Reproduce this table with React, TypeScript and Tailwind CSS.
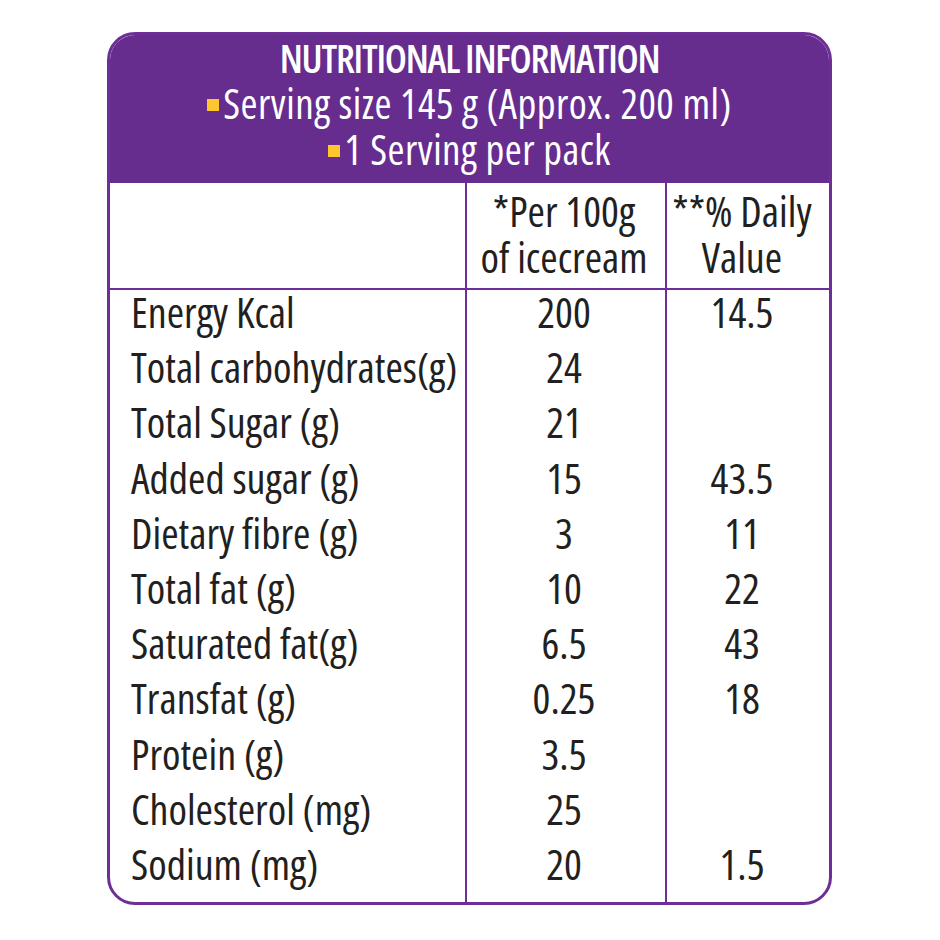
const rows = [
  { name: 'Energy Kcal', per: '200', dv: '14.5' },
  { name: 'Total carbohydrates(g)', per: '24', dv: '' },
  { name: 'Total Sugar (g)', per: '21', dv: '' },
  { name: 'Added sugar (g)', per: '15', dv: '43.5' },
  { name: 'Dietary fibre (g)', per: '3', dv: '11' },
  { name: 'Total fat (g)', per: '10', dv: '22' },
  { name: 'Saturated fat(g)', per: '6.5', dv: '43' },
  { name: 'Transfat (g)', per: '0.25', dv: '18' },
  { name: 'Protein (g)', per: '3.5', dv: '' },
  { name: 'Cholesterol (mg)', per: '25', dv: '' },
  { name: 'Sodium (mg)', per: '20', dv: '1.5' },
]

function Bullet() {
  return <span className="mr-[4px] inline-block h-[12px] w-[12px] bg-[#fdc62c] align-[8px]" />
}

export default function App() {
  return (
    <div className="h-[940px] w-[940px] bg-white pl-[107px] pt-[32px] font-['Open_Sans',sans-serif] [font-stretch:75%] text-[#231f20]">
      <div className="flex h-[873px] w-[725px] flex-col overflow-hidden rounded-[28px] border-[3px] border-[#6d2f97] bg-white">
        {/* Purple header */}
        <div className="flex h-[148px] shrink-0 flex-col items-center bg-[#662d8f] pt-[1px] text-white">
          <div className="text-[39px] font-semibold leading-[44px] tracking-[-1.2px]">NUTRITIONAL INFORMATION</div>
          <div className="text-[41px] leading-[46px] tracking-[0.5px]">
            <Bullet />
            Serving size 145 g (Approx. 200 ml)
          </div>
          <div className="text-[41px] leading-[46px] tracking-[0.5px]">
            <Bullet />1 Serving per pack
          </div>
        </div>

        {/* Table */}
        <div className="flex flex-1 text-[42px]">
          <div className="flex w-[355px] flex-col">
            <div className="h-[107px] border-b-2 border-[#6d2f97]" />
            {rows.map((r) => (
              <div key={r.name} className="h-[55.2px] whitespace-nowrap pl-[21px] leading-[44px]">
                {r.name}
              </div>
            ))}
          </div>
          <div className="flex w-[200px] flex-col border-l-2 border-[#6d2f97] text-center">
            <div className="h-[107px] border-b-2 border-[#6d2f97] pr-[4px] pt-[5px] leading-[46px]">
              *Per 100g
              <br />
              of icecream
            </div>
            {rows.map((r) => (
              <div key={r.name} className="h-[55.2px] pr-[4px] leading-[44px]">
                {r.per}
              </div>
            ))}
          </div>
          <div className="flex flex-1 flex-col border-l-2 border-[#6d2f97] text-center">
            <div className="h-[107px] whitespace-nowrap border-b-2 border-[#6d2f97] pr-[12px] pt-[5px] leading-[46px]">
              **% Daily
              <br />
              Value
            </div>
            {rows.map((r) => (
              <div key={r.name} className="h-[55.2px] pr-[12px] leading-[44px]">
                {r.dv}
              </div>
            ))}
          </div>
        </div>
      </div>
    </div>
  )
}
